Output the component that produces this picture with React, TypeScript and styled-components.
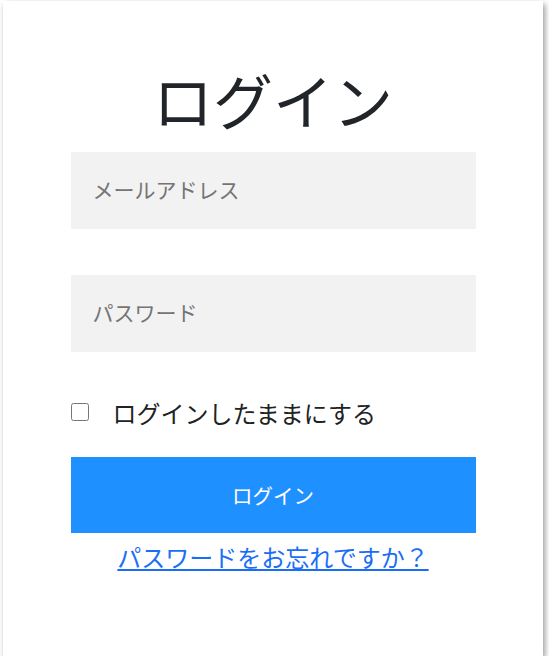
import React from "react";
import styled, { createGlobalStyle } from "styled-components";

const Global = createGlobalStyle`
  html, body { margin: 0; padding: 0; background: #ffffff; }
  body { font-family: "Noto Sans CJK JP", "Noto Sans", sans-serif; }
  * { box-sizing: border-box; }
`;

const Card = styled.div`
  margin: 1px 0 0 3px;
  width: 540px;
  height: 655px;
  background: #ffffff;
  box-shadow: 2px 3px 6px rgba(0, 0, 0, 0.4);
  display: flex;
  flex-direction: column;
  align-items: center;
  padding-top: 62px;
`;

const Title = styled.h1`
  margin: 0;
  font-size: 60px;
  line-height: 72px;
  font-weight: 400;
  color: #212529;
`;

const Form = styled.form`
  width: 405px;
  display: flex;
  flex-direction: column;
  margin-top: 17px;
`;

const Field = styled.input<{ $gap?: number }>`
  width: 100%;
  height: 77px;
  border: none;
  outline: none;
  background: #f2f2f2;
  padding: 0 22px 4px;
  font-family: inherit;
  font-size: 21px;
  color: #333;
  margin-top: ${(p) => p.$gap ?? 0}px;
  &::placeholder { color: #757575; }
`;

const CheckRow = styled.label`
  display: flex;
  align-items: center;
  height: 30px;
  margin-top: 45px;
  font-size: 24px;
  color: #222;
  cursor: pointer;
`;

const Check = styled.input`
  width: 18px;
  height: 18px;
  margin: 0 24px 0 0;
`;

const Submit = styled.button`
  margin-top: 30px;
  height: 76px;
  width: 100%;
  border: none;
  background: #1e90ff;
  color: #ffffff;
  font-family: inherit;
  font-size: 20.5px;
  cursor: pointer;
`;

const Forgot = styled.a`
  align-self: center;
  margin-top: 9px;
  font-size: 24px;
  line-height: 29px;
  color: #1a6ef5;
  text-decoration: underline;
`;

export default function App() {
  return (
    <>
      <Global />
      <Card>
        <Title>ログイン</Title>
        <Form onSubmit={(e) => e.preventDefault()}>
          <Field type="email" placeholder="メールアドレス" />
          <Field type="password" placeholder="パスワード" $gap={46} />
          <CheckRow>
            <Check type="checkbox" />
            ログインしたままにする
          </CheckRow>
          <Submit type="submit">ログイン</Submit>
          <Forgot href="#">パスワードをお忘れですか？</Forgot>
        </Form>
      </Card>
    </>
  );
}
